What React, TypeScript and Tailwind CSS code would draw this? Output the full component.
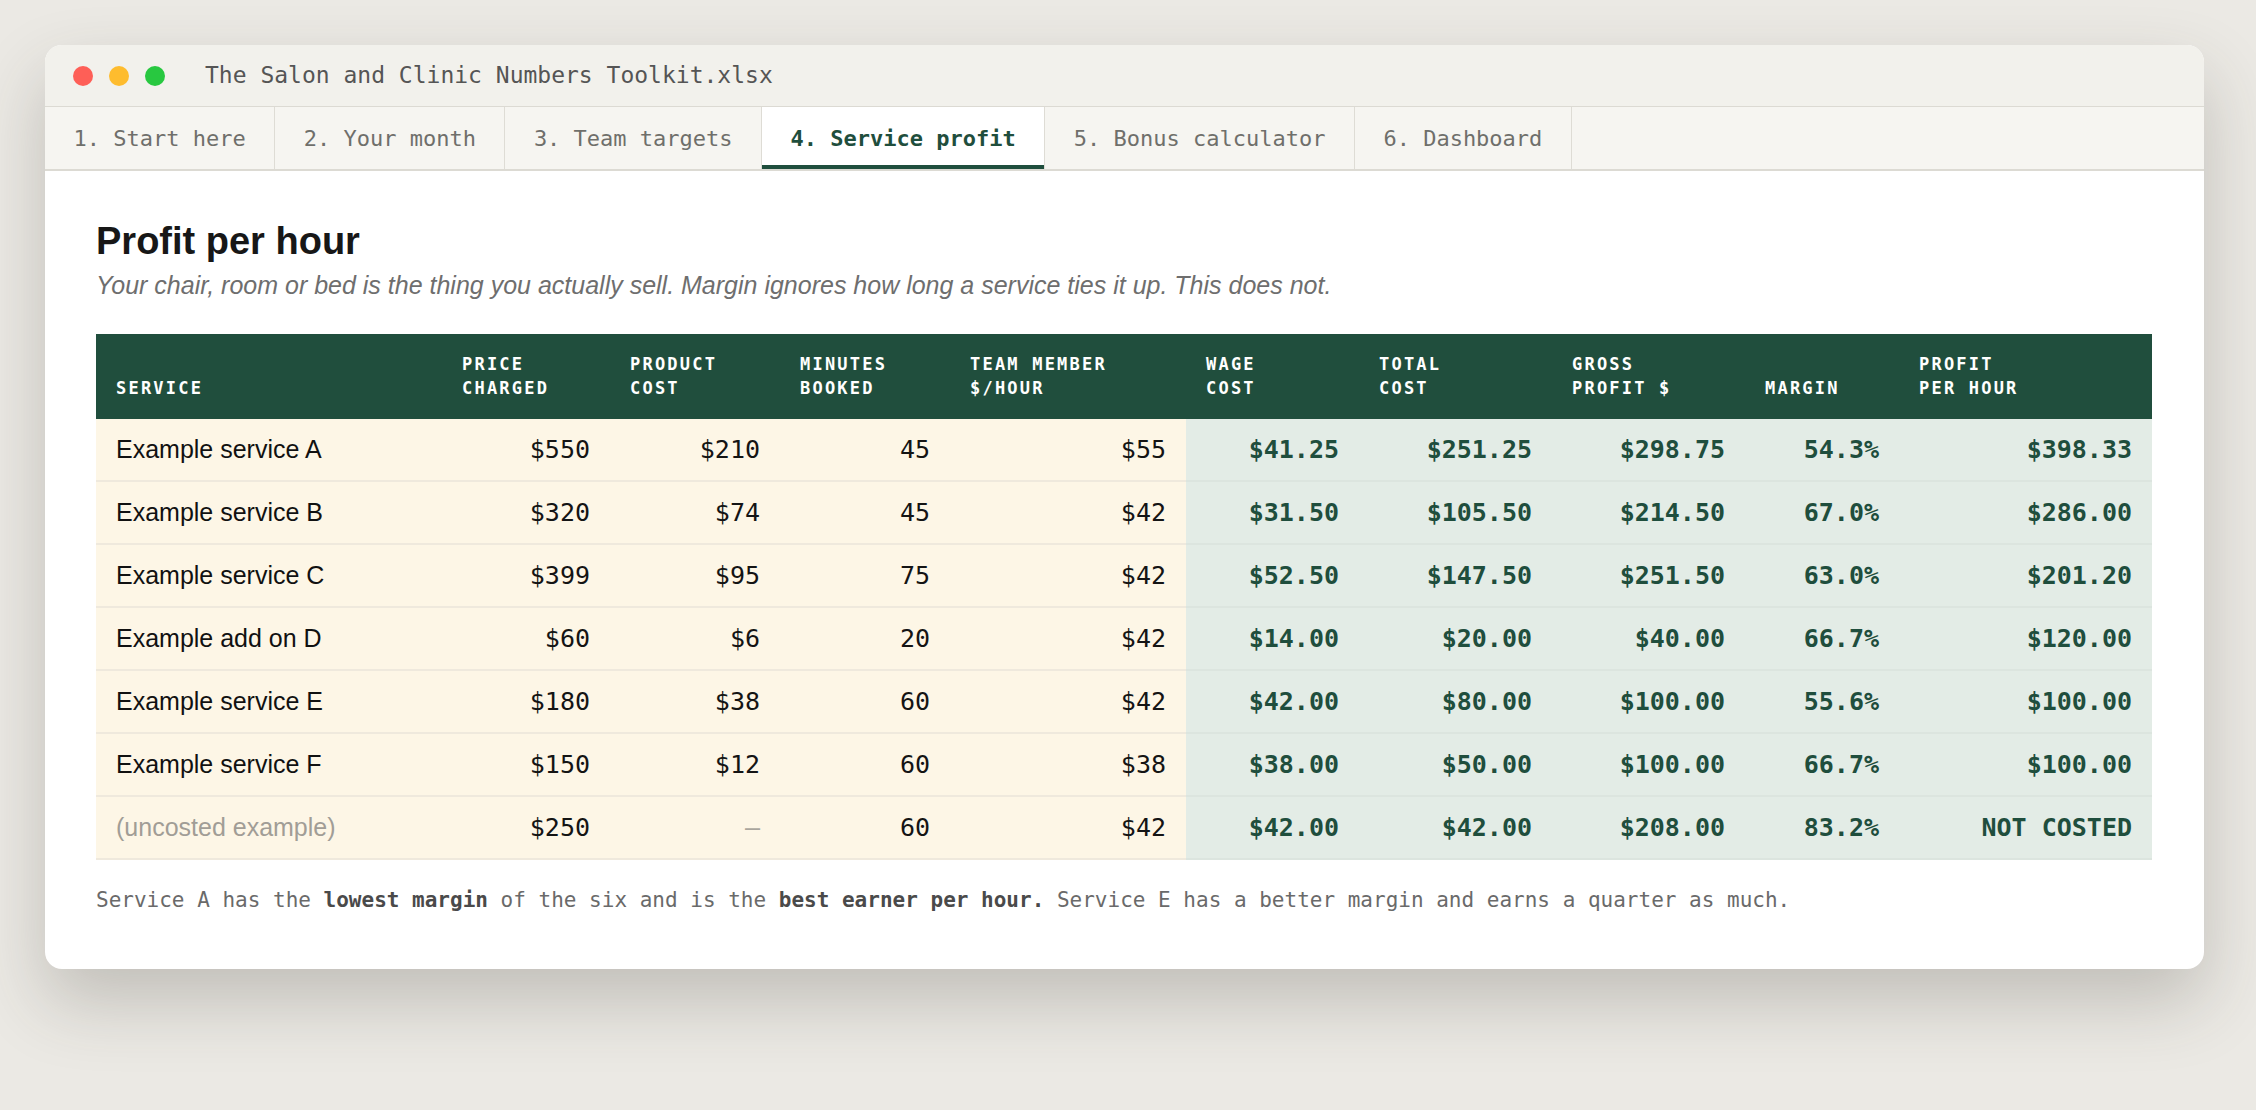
import React from "react";

type Row = {
  name: string;
  price: string;
  product: string;
  minutes: string;
  rate: string;
  wage: string;
  total: string;
  gross: string;
  margin: string;
  pph: string;
  muted?: boolean;
};

const rows: Row[] = [
  { name: "Example service A", price: "$550", product: "$210", minutes: "45", rate: "$55", wage: "$41.25", total: "$251.25", gross: "$298.75", margin: "54.3%", pph: "$398.33" },
  { name: "Example service B", price: "$320", product: "$74", minutes: "45", rate: "$42", wage: "$31.50", total: "$105.50", gross: "$214.50", margin: "67.0%", pph: "$286.00" },
  { name: "Example service C", price: "$399", product: "$95", minutes: "75", rate: "$42", wage: "$52.50", total: "$147.50", gross: "$251.50", margin: "63.0%", pph: "$201.20" },
  { name: "Example add on D", price: "$60", product: "$6", minutes: "20", rate: "$42", wage: "$14.00", total: "$20.00", gross: "$40.00", margin: "66.7%", pph: "$120.00" },
  { name: "Example service E", price: "$180", product: "$38", minutes: "60", rate: "$42", wage: "$42.00", total: "$80.00", gross: "$100.00", margin: "55.6%", pph: "$100.00" },
  { name: "Example service F", price: "$150", product: "$12", minutes: "60", rate: "$38", wage: "$38.00", total: "$50.00", gross: "$100.00", margin: "66.7%", pph: "$100.00" },
  { name: "(uncosted example)", price: "$250", product: "—", minutes: "60", rate: "$42", wage: "$42.00", total: "$42.00", gross: "$208.00", margin: "83.2%", pph: "NOT COSTED", muted: true },
];

const tabs = [
  "1. Start here",
  "2. Your month",
  "3. Team targets",
  "4. Service profit",
  "5. Bonus calculator",
  "6. Dashboard",
];

const headers: [string, string][] = [
  ["", "SERVICE"],
  ["PRICE", "CHARGED"],
  ["PRODUCT", "COST"],
  ["MINUTES", "BOOKED"],
  ["TEAM MEMBER", "$/HOUR"],
  ["WAGE", "COST"],
  ["TOTAL", "COST"],
  ["GROSS", "PROFIT $"],
  ["", "MARGIN"],
  ["PROFIT", "PER HOUR"],
];

const mono = "font-['DejaVu_Sans_Mono',monospace]";
const sans = "font-['Liberation_Sans',Arial,sans-serif]";

function CreamCell({ children, muted }: { children: React.ReactNode; muted?: boolean }) {
  return (
    <td
      className={`h-[63px] px-[20px] pt-[1px] pb-0 text-right align-middle bg-[#fdf6e6] border-b-2 border-[#efe9dd] ${mono} text-[25px] ${muted ? "text-[#a9a59d]" : "text-[#141414]"}`}
    >
      {children}
    </td>
  );
}

function GreenCell({ children }: { children: React.ReactNode }) {
  return (
    <td
      className={`h-[63px] px-[20px] pt-[1px] pb-0 text-right align-middle bg-[#e3ece6] border-b-2 border-[#dce5df] ${mono} text-[25px] font-bold text-[#1f4e3d]`}
    >
      {children}
    </td>
  );
}

export default function App() {
  return (
    <div className="min-h-screen w-full bg-[#ebe9e4] pt-[45px] pl-[45px] pb-[143px]">
      <div className="w-[2159px] rounded-[17px] overflow-hidden bg-white shadow-[0_32px_70px_rgba(60,55,45,0.24)]">
        {/* Title bar */}
        <div className="h-[62px] flex items-center pl-[28px] bg-[#f2f1ec] border-b border-[#dcdad3]">
          <div className="flex items-center gap-[16px]">
            <span className="block w-[20px] h-[20px] rounded-full bg-[#fe5f57]" />
            <span className="block w-[20px] h-[20px] rounded-full bg-[#febc2e]" />
            <span className="block w-[20px] h-[20px] rounded-full bg-[#28c840]" />
          </div>
          <div className={`ml-[40px] ${mono} text-[23px] text-[#555555]`}>
            The Salon and Clinic Numbers Toolkit.xlsx
          </div>
        </div>

        {/* Tabs */}
        <div className="h-[64px] flex bg-[#f6f5f1] border-b-2 border-[#dcdad3]">
          {tabs.map((t, i) => {
            const active = i === 3;
            return (
              <div
                key={t}
                className={`h-full flex items-center px-[28.5px] border-r border-[#dedcd5] ${mono} text-[22px] ${
                  active
                    ? "bg-white font-bold text-[#1f4e3d] shadow-[inset_0_-4px_0_#1f4e3d]"
                    : "text-[#6f6f6b]"
                }`}
              >
                {t}
              </div>
            );
          })}
        </div>

        {/* Content */}
        <div className="pl-[51px] pr-[52px] pt-[48px] pb-[53px]">
          <h1 className={`${sans} text-[38px] leading-[1.2] font-bold text-[#171717]`}>Profit per hour</h1>
          <p className={`mt-[3px] ${sans} italic text-[25px] leading-[35px] text-[#6e6e6e]`}>
            Your chair, room or bed is the thing you actually sell. Margin ignores how long a service ties it up. This does not.
          </p>

          <table className="mt-[31px] w-full table-fixed border-separate border-spacing-0">
            <colgroup>
              <col className="w-[346px]" />
              <col className="w-[168px]" />
              <col className="w-[170px]" />
              <col className="w-[170px]" />
              <col className="w-[236px]" />
              <col className="w-[173px]" />
              <col className="w-[193px]" />
              <col className="w-[193px]" />
              <col className="w-[154px]" />
              <col className="w-[253px]" />
            </colgroup>
            <thead>
              <tr>
                {headers.map(([a, b], i) => (
                  <th
                    key={i}
                    className={`h-[85px] bg-[#204e3d] px-[20px] pb-[18px] pt-0 align-bottom text-left ${mono} text-[17px] leading-[24.5px] font-bold tracking-[0.13em] text-white`}
                  >
                    {a && <div>{a}</div>}
                    <div>{b}</div>
                  </th>
                ))}
              </tr>
            </thead>
            <tbody>
              {rows.map((r) => (
                <tr key={r.name}>
                  <td
                    className={`h-[63px] px-[20px] pt-[1px] pb-0 text-left align-middle bg-[#fdf6e6] border-b-2 border-[#efe9dd] ${sans} text-[25px] ${
                      r.muted ? "text-[#a19d96]" : "text-[#111111]"
                    }`}
                  >
                    {r.name}
                  </td>
                  <CreamCell>{r.price}</CreamCell>
                  <CreamCell muted={r.product === "—"}>{r.product}</CreamCell>
                  <CreamCell>{r.minutes}</CreamCell>
                  <CreamCell>{r.rate}</CreamCell>
                  <GreenCell>{r.wage}</GreenCell>
                  <GreenCell>{r.total}</GreenCell>
                  <GreenCell>{r.gross}</GreenCell>
                  <GreenCell>{r.margin}</GreenCell>
                  <GreenCell>{r.pph}</GreenCell>
                </tr>
              ))}
            </tbody>
          </table>

          <p className={`mt-[25px] ${mono} text-[21px] leading-[31px] text-[#6a6a6a]`}>
            Service A has the <span className="font-bold text-[#4a4a4a]">lowest margin</span> of the six and is the{" "}
            <span className="font-bold text-[#4a4a4a]">best earner per hour.</span> Service E has a better margin and earns a quarter as much.
          </p>
        </div>
      </div>
    </div>
  );
}
